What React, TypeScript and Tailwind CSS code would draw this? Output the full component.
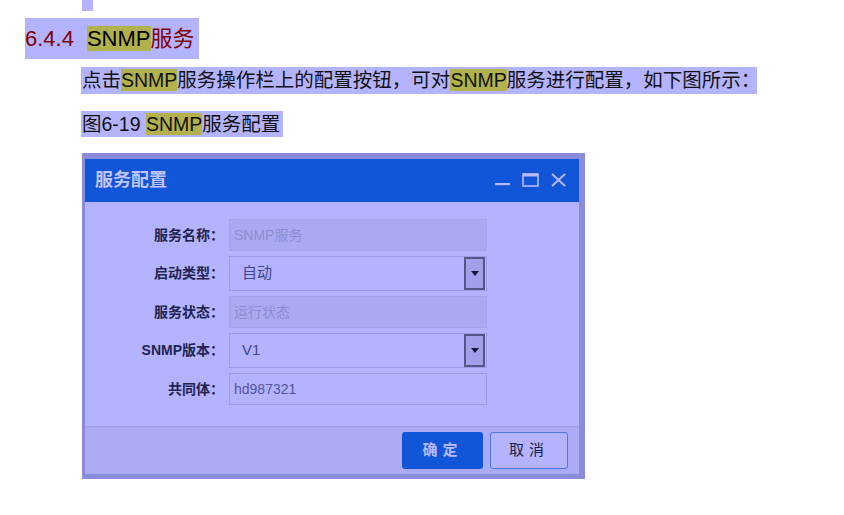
import React from "react";

const FONT = { fontFamily: '"Liberation Sans", "Noto Sans CJK SC", sans-serif' };

function Hl({ children }: { children: React.ReactNode }) {
  return <span className="bg-[#b2b24c]">{children}</span>;
}

function Field({ label, children }: { label: string; children: React.ReactNode }) {
  return (
    <div className="flex items-center">
      <div className="w-[139px] text-right text-[14px] font-bold text-[#23234f]">{label}</div>
      <div className="ml-[5px] w-[258px]">{children}</div>
    </div>
  );
}

function TextBox({ value, disabled }: { value: string; disabled?: boolean }) {
  return (
    <div
      className={
        disabled
          ? "flex h-[32px] items-center border border-[#a3a3ea] bg-[#aaaaf2] pl-[4px] text-[14px] text-[#8d8dd2]"
          : "flex h-[32px] items-center border border-[#9a9ae6] bg-[#b3b3ff] pl-[4px] text-[14px] text-[#55559a]"
      }
    >
      {value}
    </div>
  );
}

function SelectBox({ value }: { value: string }) {
  return (
    <div className="flex h-[35px] items-center border border-[#9c9ce6] bg-[#b3b3ff]">
      <div className="flex-1 pl-[12px] text-[15px] text-[#45458c]">{value}</div>
      <div className="mr-[1px] flex h-[33px] w-[21px] items-center justify-center border-2 border-[#55558a] bg-[#a0a0ea]">
        <svg width="8" height="5" viewBox="0 0 8 5">
          <polygon points="0,0 8,0 4,5" fill="#15153a" />
        </svg>
      </div>
    </div>
  );
}

export default function App() {
  return (
    <div className="relative h-[515px] w-[844px] bg-white" style={FONT}>
      <div className="ml-[82px] h-[11px] w-[11px] bg-[#b3b3ff]" />
      <div className="ml-[25px] mt-[7px] h-[41px] w-[174px] whitespace-nowrap bg-[#b3b3ff] text-[22px] leading-[41px] text-[#800000]">
        6.4.4<span className="ml-[13px] text-black"><Hl>SNMP</Hl></span>服务
      </div>
      <div className="ml-[81px] mt-[8px] h-[27px] w-[676px] whitespace-nowrap bg-[#b3b3ff] pl-[1px] text-[19.5px] leading-[27px] text-[#111]">
        点击<Hl>SNMP</Hl>服务操作栏上的配置按钮，可对<Hl>SNMP</Hl>服务进行配置，如下图所示：
      </div>
      <div className="ml-[81px] mt-[17px] h-[26px] w-[202px] whitespace-nowrap bg-[#b3b3ff] pl-[1px] text-[19.5px] leading-[26px] text-[#111]">
        图6-19 <Hl>SNMP</Hl>服务配置
      </div>
      <div className="ml-[82px] mt-[16px] w-[503px] border-b-[5px] border-l-[3px] border-r-[6px] border-t-[6px] border-[#8b8bdb]">
        <div className="flex h-[43px] items-center bg-[#1156d9] pl-[10px] pr-[12px]">
          <div className="flex-1 text-[18px] font-bold text-[#c4c4ff]">服务配置</div>
          <svg width="72" height="16" viewBox="0 0 72 16" className="mt-[1px]">
            <rect x="0" y="10" width="15" height="2.2" fill="#b9b9ff" />
            <rect x="28" y="1" width="15" height="12" fill="none" stroke="#b9b9ff" strokeWidth="1.6" />
            <rect x="28" y="0.5" width="15" height="3" fill="#b9b9ff" />
            <path d="M57 1 L70 13 M70 1 L57 13" stroke="#b9b9ff" strokeWidth="2" />
          </svg>
        </div>
        <div className="flex flex-col gap-[5px] bg-[#b3b3ff] pb-[21px] pt-[17px]">
          <Field label="服务名称：">
            <TextBox value="SNMP服务" disabled />
          </Field>
          <Field label="启动类型：">
            <SelectBox value="自动" />
          </Field>
          <Field label="服务状态：">
            <TextBox value="运行状态" disabled />
          </Field>
          <Field label="SNMP版本：">
            <SelectBox value="V1" />
          </Field>
          <Field label="共同体：">
            <TextBox value="hd987321" />
          </Field>
        </div>
        <div className="h-[1px] bg-[#9d9de6]" />
        <div className="flex justify-end gap-[7px] bg-[#ababf5] pb-[5px] pr-[11px] pt-[5px]">
          <div className="flex h-[37px] w-[81px] items-center justify-center rounded-[3px] bg-[#1156d9] text-[15px] font-bold tracking-[5px] text-[#b9b9ff]">
            确定
          </div>
          <div className="flex h-[37px] w-[78px] items-center justify-center rounded-[3px] border border-[#4a78e6] bg-[#b3b3ff] text-[15px] tracking-[5px] text-[#22223f]">
            取消
          </div>
        </div>
      </div>
    </div>
  );
}
